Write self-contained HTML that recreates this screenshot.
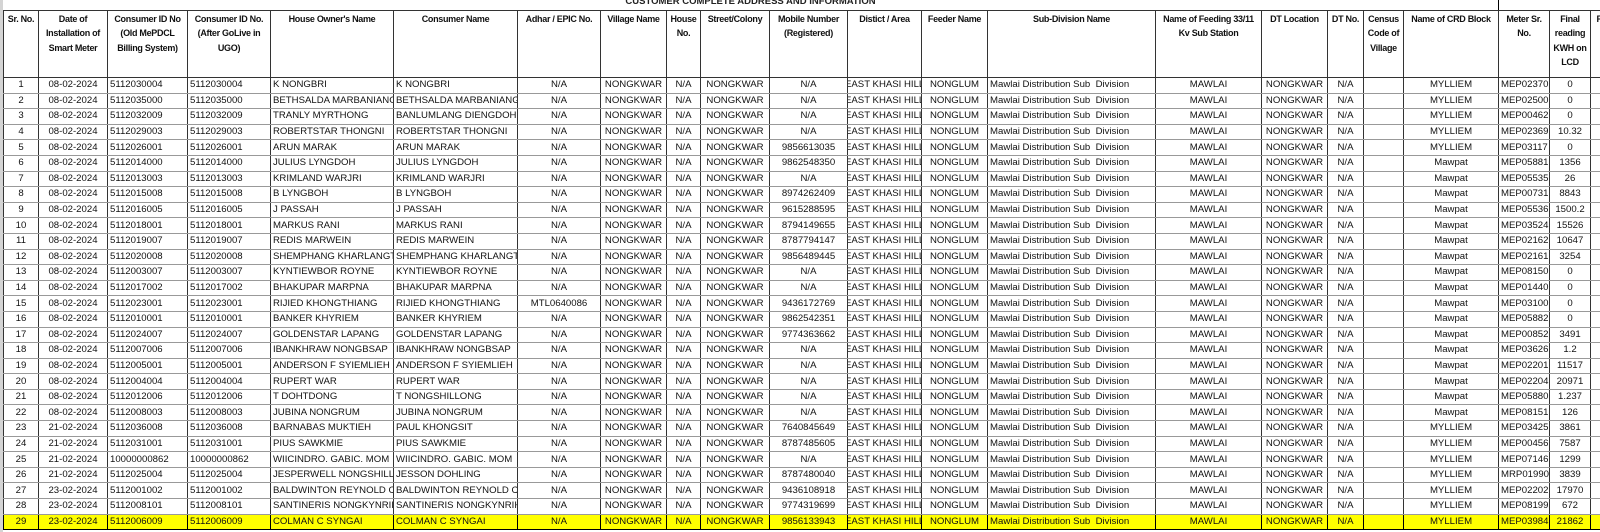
<!DOCTYPE html>
<html><head><meta charset="utf-8"><style>
body{margin:0;width:1600px;height:532px;overflow:hidden;background:#fff;font-family:"Liberation Sans",sans-serif;position:relative}
.strip{position:absolute;left:0;top:0;width:3px;height:532px;background:#d4d4d4}
.title{position:absolute;left:3px;top:-4px;width:1495px;text-align:center;font-size:9.5px;font-weight:bold;color:#222}
.tl{position:absolute;left:1498px;top:0;width:1px;height:10px;background:#000}
table{position:absolute;left:3px;top:10px;border-collapse:collapse;table-layout:fixed;width:1610px;font-size:9.6px;color:#111}
td{border:1px solid #333;padding:0 2px;white-space:nowrap;overflow:hidden;height:14.6px;line-height:14px;text-align:center}
tr.h td{height:65px;vertical-align:top;font-weight:bold;white-space:normal;line-height:14.3px;font-size:9px;letter-spacing:-0.3px;padding:1px 1px 0}
tbody tr td{border-top-color:#999;border-bottom-color:#999}
td.l{text-align:left}
td.d{padding:0;text-indent:-3px}
tr.y td{background:#ffff00;border-color:#000}
</style></head><body>
<div class="strip"></div>
<div class="title">CUSTOMER COMPLETE ADDRESS AND INFORMATION</div>
<div class="tl"></div>
<table>
<colgroup><col style="width:35px"><col style="width:69px"><col style="width:80px"><col style="width:83px"><col style="width:123px"><col style="width:124px"><col style="width:83px"><col style="width:66px"><col style="width:34px"><col style="width:69px"><col style="width:78px"><col style="width:74px"><col style="width:66px"><col style="width:168px"><col style="width:106px"><col style="width:66px"><col style="width:36px"><col style="width:40px"><col style="width:95px"><col style="width:51px"><col style="width:41px"><col style="width:23px"></colgroup>
<thead><tr class="h"><td>Sr. No.</td><td>Date of Installation of Smart Meter</td><td>Consumer ID No (Old MePDCL Billing System)</td><td>Consumer ID No. (After GoLive in UGO)</td><td>House Owner's Name</td><td>Consumer Name</td><td>Adhar / EPIC No.</td><td>Village Name</td><td>House No.</td><td>Street/Colony</td><td>Mobile Number (Registered)</td><td>Distict / Area</td><td>Feeder Name</td><td>Sub-Division Name</td><td>Name of Feeding 33/11 Kv Sub Station</td><td>DT Location</td><td>DT No.</td><td>Census Code of Village</td><td>Name of CRD Block</td><td>Meter Sr. No.</td><td>Final reading KWH on LCD</td><td>Re</td></tr></thead>
<tbody>
<tr><td>1</td><td>08-02-2024</td><td class="l">5112030004</td><td class="l">5112030004</td><td class="l">K NONGBRI</td><td class="l">K NONGBRI</td><td>N/A</td><td>NONGKWAR</td><td>N/A</td><td>NONGKWAR</td><td>N/A</td><td class="d">EAST KHASI HILLS</td><td>NONGLUM</td><td class="l">Mawlai Distribution Sub &nbsp;Division</td><td>MAWLAI</td><td>NONGKWAR</td><td>N/A</td><td></td><td>MYLLIEM</td><td class="l">MEP02370</td><td>0</td><td></td></tr>
<tr><td>2</td><td>08-02-2024</td><td class="l">5112035000</td><td class="l">5112035000</td><td class="l">BETHSALDA MARBANIANG</td><td class="l">BETHSALDA MARBANIANG</td><td>N/A</td><td>NONGKWAR</td><td>N/A</td><td>NONGKWAR</td><td>N/A</td><td class="d">EAST KHASI HILLS</td><td>NONGLUM</td><td class="l">Mawlai Distribution Sub &nbsp;Division</td><td>MAWLAI</td><td>NONGKWAR</td><td>N/A</td><td></td><td>MYLLIEM</td><td class="l">MEP02500</td><td>0</td><td></td></tr>
<tr><td>3</td><td>08-02-2024</td><td class="l">5112032009</td><td class="l">5112032009</td><td class="l">TRANLY MYRTHONG</td><td class="l">BANLUMLANG DIENGDOH</td><td>N/A</td><td>NONGKWAR</td><td>N/A</td><td>NONGKWAR</td><td>N/A</td><td class="d">EAST KHASI HILLS</td><td>NONGLUM</td><td class="l">Mawlai Distribution Sub &nbsp;Division</td><td>MAWLAI</td><td>NONGKWAR</td><td>N/A</td><td></td><td>MYLLIEM</td><td class="l">MEP00462</td><td>0</td><td></td></tr>
<tr><td>4</td><td>08-02-2024</td><td class="l">5112029003</td><td class="l">5112029003</td><td class="l">ROBERTSTAR THONGNI</td><td class="l">ROBERTSTAR THONGNI</td><td>N/A</td><td>NONGKWAR</td><td>N/A</td><td>NONGKWAR</td><td>N/A</td><td class="d">EAST KHASI HILLS</td><td>NONGLUM</td><td class="l">Mawlai Distribution Sub &nbsp;Division</td><td>MAWLAI</td><td>NONGKWAR</td><td>N/A</td><td></td><td>MYLLIEM</td><td class="l">MEP02369</td><td>10.32</td><td></td></tr>
<tr><td>5</td><td>08-02-2024</td><td class="l">5112026001</td><td class="l">5112026001</td><td class="l">ARUN MARAK</td><td class="l">ARUN MARAK</td><td>N/A</td><td>NONGKWAR</td><td>N/A</td><td>NONGKWAR</td><td>9856613035</td><td class="d">EAST KHASI HILLS</td><td>NONGLUM</td><td class="l">Mawlai Distribution Sub &nbsp;Division</td><td>MAWLAI</td><td>NONGKWAR</td><td>N/A</td><td></td><td>MYLLIEM</td><td class="l">MEP03117</td><td>0</td><td></td></tr>
<tr><td>6</td><td>08-02-2024</td><td class="l">5112014000</td><td class="l">5112014000</td><td class="l">JULIUS LYNGDOH</td><td class="l">JULIUS LYNGDOH</td><td>N/A</td><td>NONGKWAR</td><td>N/A</td><td>NONGKWAR</td><td>9862548350</td><td class="d">EAST KHASI HILLS</td><td>NONGLUM</td><td class="l">Mawlai Distribution Sub &nbsp;Division</td><td>MAWLAI</td><td>NONGKWAR</td><td>N/A</td><td></td><td>Mawpat</td><td class="l">MEP05881</td><td>1356</td><td></td></tr>
<tr><td>7</td><td>08-02-2024</td><td class="l">5112013003</td><td class="l">5112013003</td><td class="l">KRIMLAND WARJRI</td><td class="l">KRIMLAND WARJRI</td><td>N/A</td><td>NONGKWAR</td><td>N/A</td><td>NONGKWAR</td><td>N/A</td><td class="d">EAST KHASI HILLS</td><td>NONGLUM</td><td class="l">Mawlai Distribution Sub &nbsp;Division</td><td>MAWLAI</td><td>NONGKWAR</td><td>N/A</td><td></td><td>Mawpat</td><td class="l">MEP05535</td><td>26</td><td></td></tr>
<tr><td>8</td><td>08-02-2024</td><td class="l">5112015008</td><td class="l">5112015008</td><td class="l">B LYNGBOH</td><td class="l">B LYNGBOH</td><td>N/A</td><td>NONGKWAR</td><td>N/A</td><td>NONGKWAR</td><td>8974262409</td><td class="d">EAST KHASI HILLS</td><td>NONGLUM</td><td class="l">Mawlai Distribution Sub &nbsp;Division</td><td>MAWLAI</td><td>NONGKWAR</td><td>N/A</td><td></td><td>Mawpat</td><td class="l">MEP00731</td><td>8843</td><td></td></tr>
<tr><td>9</td><td>08-02-2024</td><td class="l">5112016005</td><td class="l">5112016005</td><td class="l">J PASSAH</td><td class="l">J PASSAH</td><td>N/A</td><td>NONGKWAR</td><td>N/A</td><td>NONGKWAR</td><td>9615288595</td><td class="d">EAST KHASI HILLS</td><td>NONGLUM</td><td class="l">Mawlai Distribution Sub &nbsp;Division</td><td>MAWLAI</td><td>NONGKWAR</td><td>N/A</td><td></td><td>Mawpat</td><td class="l">MEP05536</td><td>1500.2</td><td></td></tr>
<tr><td>10</td><td>08-02-2024</td><td class="l">5112018001</td><td class="l">5112018001</td><td class="l">MARKUS RANI</td><td class="l">MARKUS RANI</td><td>N/A</td><td>NONGKWAR</td><td>N/A</td><td>NONGKWAR</td><td>8794149655</td><td class="d">EAST KHASI HILLS</td><td>NONGLUM</td><td class="l">Mawlai Distribution Sub &nbsp;Division</td><td>MAWLAI</td><td>NONGKWAR</td><td>N/A</td><td></td><td>Mawpat</td><td class="l">MEP03524</td><td>15526</td><td></td></tr>
<tr><td>11</td><td>08-02-2024</td><td class="l">5112019007</td><td class="l">5112019007</td><td class="l">REDIS MARWEIN</td><td class="l">REDIS MARWEIN</td><td>N/A</td><td>NONGKWAR</td><td>N/A</td><td>NONGKWAR</td><td>8787794147</td><td class="d">EAST KHASI HILLS</td><td>NONGLUM</td><td class="l">Mawlai Distribution Sub &nbsp;Division</td><td>MAWLAI</td><td>NONGKWAR</td><td>N/A</td><td></td><td>Mawpat</td><td class="l">MEP02162</td><td>10647</td><td></td></tr>
<tr><td>12</td><td>08-02-2024</td><td class="l">5112020008</td><td class="l">5112020008</td><td class="l">SHEMPHANG KHARLANGT</td><td class="l">SHEMPHANG KHARLANGT</td><td>N/A</td><td>NONGKWAR</td><td>N/A</td><td>NONGKWAR</td><td>9856489445</td><td class="d">EAST KHASI HILLS</td><td>NONGLUM</td><td class="l">Mawlai Distribution Sub &nbsp;Division</td><td>MAWLAI</td><td>NONGKWAR</td><td>N/A</td><td></td><td>Mawpat</td><td class="l">MEP02161</td><td>3254</td><td></td></tr>
<tr><td>13</td><td>08-02-2024</td><td class="l">5112003007</td><td class="l">5112003007</td><td class="l">KYNTIEWBOR ROYNE</td><td class="l">KYNTIEWBOR ROYNE</td><td>N/A</td><td>NONGKWAR</td><td>N/A</td><td>NONGKWAR</td><td>N/A</td><td class="d">EAST KHASI HILLS</td><td>NONGLUM</td><td class="l">Mawlai Distribution Sub &nbsp;Division</td><td>MAWLAI</td><td>NONGKWAR</td><td>N/A</td><td></td><td>Mawpat</td><td class="l">MEP08150</td><td>0</td><td></td></tr>
<tr><td>14</td><td>08-02-2024</td><td class="l">5112017002</td><td class="l">5112017002</td><td class="l">BHAKUPAR MARPNA</td><td class="l">BHAKUPAR MARPNA</td><td>N/A</td><td>NONGKWAR</td><td>N/A</td><td>NONGKWAR</td><td>N/A</td><td class="d">EAST KHASI HILLS</td><td>NONGLUM</td><td class="l">Mawlai Distribution Sub &nbsp;Division</td><td>MAWLAI</td><td>NONGKWAR</td><td>N/A</td><td></td><td>Mawpat</td><td class="l">MEP01440</td><td>0</td><td></td></tr>
<tr><td>15</td><td>08-02-2024</td><td class="l">5112023001</td><td class="l">5112023001</td><td class="l">RIJIED KHONGTHIANG</td><td class="l">RIJIED KHONGTHIANG</td><td>MTL0640086</td><td>NONGKWAR</td><td>N/A</td><td>NONGKWAR</td><td>9436172769</td><td class="d">EAST KHASI HILLS</td><td>NONGLUM</td><td class="l">Mawlai Distribution Sub &nbsp;Division</td><td>MAWLAI</td><td>NONGKWAR</td><td>N/A</td><td></td><td>Mawpat</td><td class="l">MEP03100</td><td>0</td><td></td></tr>
<tr><td>16</td><td>08-02-2024</td><td class="l">5112010001</td><td class="l">5112010001</td><td class="l">BANKER KHYRIEM</td><td class="l">BANKER KHYRIEM</td><td>N/A</td><td>NONGKWAR</td><td>N/A</td><td>NONGKWAR</td><td>9862542351</td><td class="d">EAST KHASI HILLS</td><td>NONGLUM</td><td class="l">Mawlai Distribution Sub &nbsp;Division</td><td>MAWLAI</td><td>NONGKWAR</td><td>N/A</td><td></td><td>Mawpat</td><td class="l">MEP05882</td><td>0</td><td></td></tr>
<tr><td>17</td><td>08-02-2024</td><td class="l">5112024007</td><td class="l">5112024007</td><td class="l">GOLDENSTAR LAPANG</td><td class="l">GOLDENSTAR LAPANG</td><td>N/A</td><td>NONGKWAR</td><td>N/A</td><td>NONGKWAR</td><td>9774363662</td><td class="d">EAST KHASI HILLS</td><td>NONGLUM</td><td class="l">Mawlai Distribution Sub &nbsp;Division</td><td>MAWLAI</td><td>NONGKWAR</td><td>N/A</td><td></td><td>Mawpat</td><td class="l">MEP00852</td><td>3491</td><td></td></tr>
<tr><td>18</td><td>08-02-2024</td><td class="l">5112007006</td><td class="l">5112007006</td><td class="l">IBANKHRAW NONGBSAP</td><td class="l">IBANKHRAW NONGBSAP</td><td>N/A</td><td>NONGKWAR</td><td>N/A</td><td>NONGKWAR</td><td>N/A</td><td class="d">EAST KHASI HILLS</td><td>NONGLUM</td><td class="l">Mawlai Distribution Sub &nbsp;Division</td><td>MAWLAI</td><td>NONGKWAR</td><td>N/A</td><td></td><td>Mawpat</td><td class="l">MEP03626</td><td>1.2</td><td></td></tr>
<tr><td>19</td><td>08-02-2024</td><td class="l">5112005001</td><td class="l">5112005001</td><td class="l">ANDERSON F SYIEMLIEH</td><td class="l">ANDERSON F SYIEMLIEH</td><td>N/A</td><td>NONGKWAR</td><td>N/A</td><td>NONGKWAR</td><td>N/A</td><td class="d">EAST KHASI HILLS</td><td>NONGLUM</td><td class="l">Mawlai Distribution Sub &nbsp;Division</td><td>MAWLAI</td><td>NONGKWAR</td><td>N/A</td><td></td><td>Mawpat</td><td class="l">MEP02201</td><td>11517</td><td></td></tr>
<tr><td>20</td><td>08-02-2024</td><td class="l">5112004004</td><td class="l">5112004004</td><td class="l">RUPERT WAR</td><td class="l">RUPERT WAR</td><td>N/A</td><td>NONGKWAR</td><td>N/A</td><td>NONGKWAR</td><td>N/A</td><td class="d">EAST KHASI HILLS</td><td>NONGLUM</td><td class="l">Mawlai Distribution Sub &nbsp;Division</td><td>MAWLAI</td><td>NONGKWAR</td><td>N/A</td><td></td><td>Mawpat</td><td class="l">MEP02204</td><td>20971</td><td></td></tr>
<tr><td>21</td><td>08-02-2024</td><td class="l">5112012006</td><td class="l">5112012006</td><td class="l">T DOHTDONG</td><td class="l">T NONGSHILLONG</td><td>N/A</td><td>NONGKWAR</td><td>N/A</td><td>NONGKWAR</td><td>N/A</td><td class="d">EAST KHASI HILLS</td><td>NONGLUM</td><td class="l">Mawlai Distribution Sub &nbsp;Division</td><td>MAWLAI</td><td>NONGKWAR</td><td>N/A</td><td></td><td>Mawpat</td><td class="l">MEP05880</td><td>1.237</td><td></td></tr>
<tr><td>22</td><td>08-02-2024</td><td class="l">5112008003</td><td class="l">5112008003</td><td class="l">JUBINA NONGRUM</td><td class="l">JUBINA NONGRUM</td><td>N/A</td><td>NONGKWAR</td><td>N/A</td><td>NONGKWAR</td><td>N/A</td><td class="d">EAST KHASI HILLS</td><td>NONGLUM</td><td class="l">Mawlai Distribution Sub &nbsp;Division</td><td>MAWLAI</td><td>NONGKWAR</td><td>N/A</td><td></td><td>Mawpat</td><td class="l">MEP08151</td><td>126</td><td></td></tr>
<tr><td>23</td><td>21-02-2024</td><td class="l">5112036008</td><td class="l">5112036008</td><td class="l">BARNABAS MUKTIEH</td><td class="l">PAUL KHONGSIT</td><td>N/A</td><td>NONGKWAR</td><td>N/A</td><td>NONGKWAR</td><td>7640845649</td><td class="d">EAST KHASI HILLS</td><td>NONGLUM</td><td class="l">Mawlai Distribution Sub &nbsp;Division</td><td>MAWLAI</td><td>NONGKWAR</td><td>N/A</td><td></td><td>MYLLIEM</td><td class="l">MEP03425</td><td>3861</td><td></td></tr>
<tr><td>24</td><td>21-02-2024</td><td class="l">5112031001</td><td class="l">5112031001</td><td class="l">PIUS SAWKMIE</td><td class="l">PIUS SAWKMIE</td><td>N/A</td><td>NONGKWAR</td><td>N/A</td><td>NONGKWAR</td><td>8787485605</td><td class="d">EAST KHASI HILLS</td><td>NONGLUM</td><td class="l">Mawlai Distribution Sub &nbsp;Division</td><td>MAWLAI</td><td>NONGKWAR</td><td>N/A</td><td></td><td>MYLLIEM</td><td class="l">MEP00456</td><td>7587</td><td></td></tr>
<tr><td>25</td><td>21-02-2024</td><td class="l">10000000862</td><td class="l">10000000862</td><td class="l">WIICINDRO. GABIC. MOM</td><td class="l">WIICINDRO. GABIC. MOM</td><td>N/A</td><td>NONGKWAR</td><td>N/A</td><td>NONGKWAR</td><td>N/A</td><td class="d">EAST KHASI HILLS</td><td>NONGLUM</td><td class="l">Mawlai Distribution Sub &nbsp;Division</td><td>MAWLAI</td><td>NONGKWAR</td><td>N/A</td><td></td><td>MYLLIEM</td><td class="l">MEP07146</td><td>1299</td><td></td></tr>
<tr><td>26</td><td>21-02-2024</td><td class="l">5112025004</td><td class="l">5112025004</td><td class="l">JESPERWELL NONGSHILLONG</td><td class="l">JESSON DOHLING</td><td>N/A</td><td>NONGKWAR</td><td>N/A</td><td>NONGKWAR</td><td>8787480040</td><td class="d">EAST KHASI HILLS</td><td>NONGLUM</td><td class="l">Mawlai Distribution Sub &nbsp;Division</td><td>MAWLAI</td><td>NONGKWAR</td><td>N/A</td><td></td><td>MYLLIEM</td><td class="l">MRP01990</td><td>3839</td><td></td></tr>
<tr><td>27</td><td>23-02-2024</td><td class="l">5112001002</td><td class="l">5112001002</td><td class="l">BALDWINTON REYNOLD C</td><td class="l">BALDWINTON REYNOLD C</td><td>N/A</td><td>NONGKWAR</td><td>N/A</td><td>NONGKWAR</td><td>9436108918</td><td class="d">EAST KHASI HILLS</td><td>NONGLUM</td><td class="l">Mawlai Distribution Sub &nbsp;Division</td><td>MAWLAI</td><td>NONGKWAR</td><td>N/A</td><td></td><td>MYLLIEM</td><td class="l">MEP02202</td><td>17970</td><td></td></tr>
<tr><td>28</td><td>23-02-2024</td><td class="l">5112008101</td><td class="l">5112008101</td><td class="l">SANTINERIS NONGKYNRIH</td><td class="l">SANTINERIS NONGKYNRIH</td><td>N/A</td><td>NONGKWAR</td><td>N/A</td><td>NONGKWAR</td><td>9774319699</td><td class="d">EAST KHASI HILLS</td><td>NONGLUM</td><td class="l">Mawlai Distribution Sub &nbsp;Division</td><td>MAWLAI</td><td>NONGKWAR</td><td>N/A</td><td></td><td>MYLLIEM</td><td class="l">MEP08199</td><td>672</td><td></td></tr>
<tr class="y"><td>29</td><td>23-02-2024</td><td class="l">5112006009</td><td class="l">5112006009</td><td class="l">COLMAN C SYNGAI</td><td class="l">COLMAN C SYNGAI</td><td>N/A</td><td>NONGKWAR</td><td>N/A</td><td>NONGKWAR</td><td>9856133943</td><td class="d">EAST KHASI HILLS</td><td>NONGLUM</td><td class="l">Mawlai Distribution Sub &nbsp;Division</td><td>MAWLAI</td><td>NONGKWAR</td><td>N/A</td><td></td><td>MYLLIEM</td><td class="l">MEP03984</td><td>21862</td><td></td></tr>
</tbody></table>
</body></html>
